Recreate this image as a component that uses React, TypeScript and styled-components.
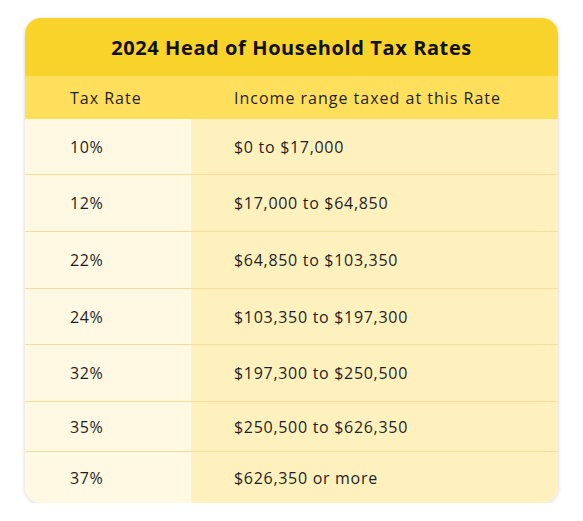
import { FC } from "react";
import styled, { createGlobalStyle } from "styled-components";

const rows: { rate: string; range: string; h: number }[] = [
  { rate: "10%", range: "$0 to $17,000", h: 56 },
  { rate: "12%", range: "$17,000 to $64,850", h: 57 },
  { rate: "22%", range: "$64,850 to $103,350", h: 57 },
  { rate: "24%", range: "$103,350 to $197,300", h: 56 },
  { rate: "32%", range: "$197,300 to $250,500", h: 57 },
  { rate: "35%", range: "$250,500 to $626,350", h: 50 },
  { rate: "37%", range: "$626,350 or more", h: 51 },
];

const App: FC = () => {
  return (
    <>
      <Global />
      <Card>
        <Title>2024 Head of Household Tax Rates</Title>
        <HeadRow>
          <HeadCell>Tax Rate</HeadCell>
          <HeadCell>Income range taxed at this Rate</HeadCell>
        </HeadRow>
        {rows.map((r, i) => (
          <Row key={r.rate} h={r.h} last={i === rows.length - 1}>
            <RateCell>{r.rate}</RateCell>
            <RangeCell>{r.range}</RangeCell>
          </Row>
        ))}
      </Card>
    </>
  );
};

export default App;

const Global = createGlobalStyle`
  body {
    margin: 0;
    background: #fff;
    font-family: "Open Sans", "Lato", sans-serif;
    color: #1f1f1f;
  }
`;

const Card = styled.div`
  margin: 18px 0 0 25px;
  width: 533px;
  border-radius: 16px;
  overflow: hidden;
  box-shadow: 0 1px 4px rgba(0, 0, 0, 0.18);
`;

const Title = styled.div`
  height: 58px;
  background: #f8d42a;
  display: flex;
  align-items: center;
  justify-content: center;
  font-size: 20px;
  font-weight: 700;
  letter-spacing: 0.6px;
  color: #111;
`;

const HeadRow = styled.div`
  display: grid;
  grid-template-columns: 166px 1fr;
  height: 43px;
  background: #ffdf5c;
`;

const HeadCell = styled.div`
  display: flex;
  align-items: center;
  padding-left: 45px;
  font-size: 16px;
  letter-spacing: 1px;
  &:nth-child(2) {
    padding-left: 43px;
  }
`;

const Row = styled.div<{ h: number; last: boolean }>`
  display: grid;
  grid-template-columns: 166px 1fr;
  height: ${(p) => p.h}px;
  border-bottom: ${(p) => (p.last ? "none" : "1px solid #fbdc96")};
  box-sizing: border-box;
`;

const RateCell = styled.div`
  display: flex;
  align-items: center;
  padding-left: 45px;
  background: #fff8e2;
  font-size: 16px;
  letter-spacing: 0.6px;
`;

const RangeCell = styled.div`
  display: flex;
  align-items: center;
  padding-left: 43px;
  background: #fff1be;
  font-size: 16px;
  letter-spacing: 0.7px;
`;
